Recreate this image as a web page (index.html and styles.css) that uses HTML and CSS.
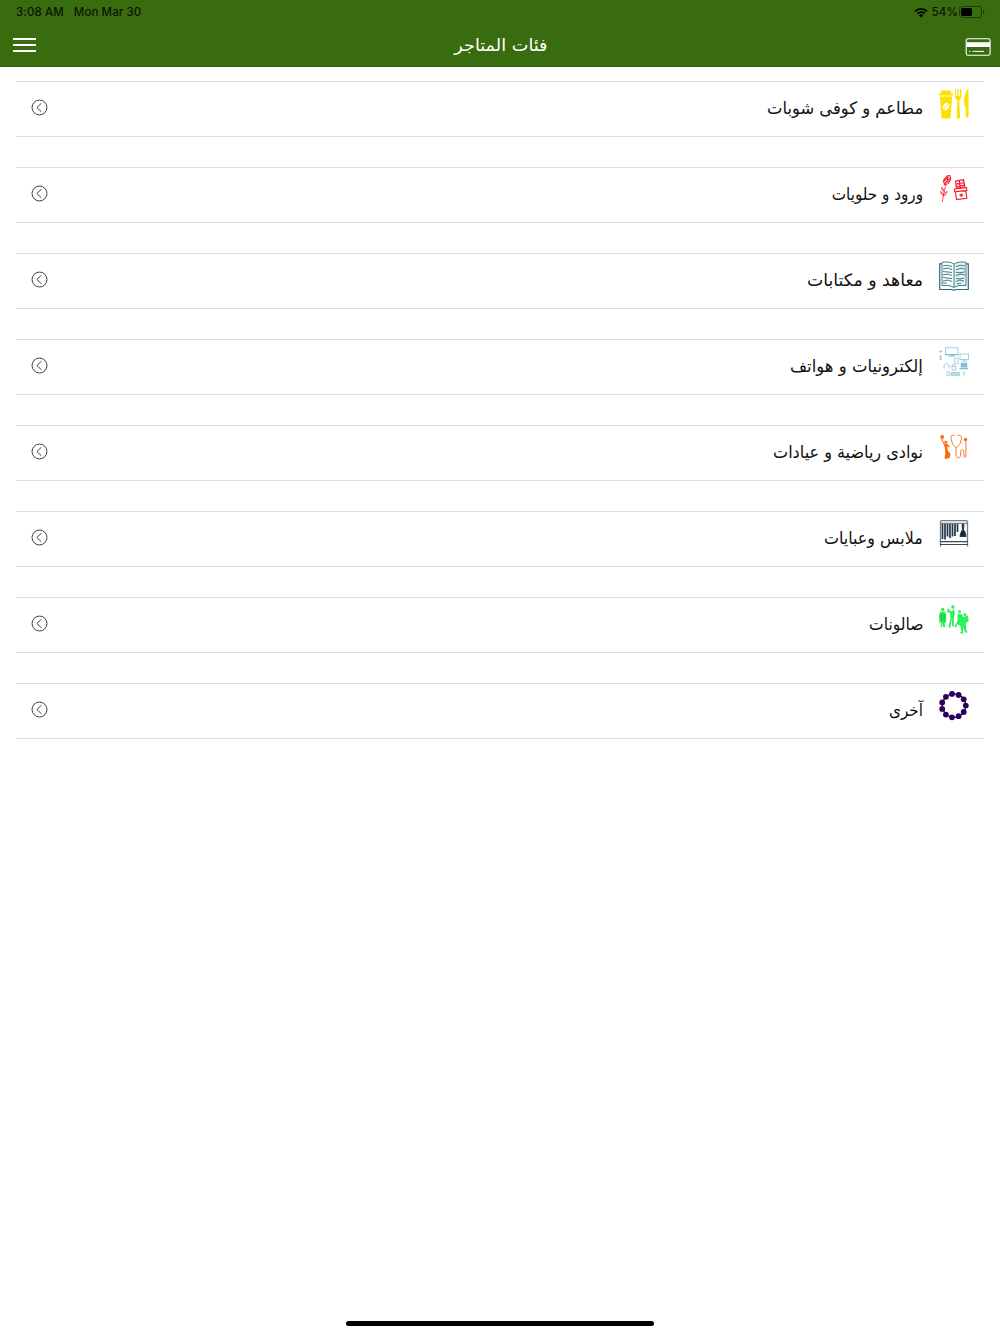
FILE: index.html
```
<!DOCTYPE html>
<html lang="ar" dir="rtl">
<head>
    <meta charset="UTF-8">
    <meta name="viewport" content="width=device-width, initial-scale=1.0">
    <title>فئات المتاجر</title>
    <link rel="stylesheet" href="styles.css">
</head>
<body>
    <header class="header">
        <div class="status-bar" dir="ltr">
            <span class="time">3:08 AM</span>
            <span class="date">Mon Mar 30</span>
            <svg class="wifi" viewBox="0 0 14 11">
                <path d="M.4 3.6a9.6 9.6 0 0 1 13.2 0L12.300 5a7.600 7.600 0 0 0-10.600 0z"/>
                <path d="M2.600 5.900a6.400 6.400 0 0 1 8.800 0L10 7.300a4.400 4.400 0 0 0-6 0z"/>
                <path d="M4.800 8.200a3.200 3.200 0 0 1 4.400 0L7 10.400z"/>
            </svg>
            <span class="percent">54%</span>
            <svg class="battery" viewBox="0 0 26 12">
                <rect x=".5" y=".5" width="22" height="11" rx="3" fill="none" stroke="#1d3a08"/>
                <rect x="2" y="2" width="11" height="8" rx="1.500"/>
                <path d="M24 4v4q1.300-.6 1.300-2T24 4z" fill="#1d3a08"/>
            </svg>
        </div>
        <div class="nav-bar" dir="ltr">
            <button class="menu-btn" aria-label="القائمة"><i></i><i></i><i></i></button>
            <h1 dir="rtl">فئات المتاجر</h1>
            <svg class="card-icon" viewBox="0 0 26 18">
                <rect x="1.200" y=".7" width="23.900" height="16.600" rx="1.800" fill="none" stroke="#fff" stroke-width="1.100"/>
                <path d="M1.500 4.200H25v4.800H1.500z" fill="#fff"/>
                <path d="M4 13.400h1.500M7.500 13.400h11.500" stroke="#fff"/>
            </svg>
        </div>
    </header>

    <main class="categories">
        <a class="category">
            <svg class="icon" viewBox="0 0 30 30" fill="#ffde00">
                <path d="M2.500 1.500h9l.8 3H14v2H0v-2h1.500zM1 7.500h12l-1.400 22H2.600z"/>
                <g stroke="#fff" stroke-width=".8"><ellipse cx="7" cy="17.500" rx="2.600" ry="3.800" transform="rotate(35 7 17.500)" fill="#fff"/><path d="M5 20.500q.5-3 2-3t2-3" fill="none" stroke="#ffde00"/></g>
                <path d="M16 0h1v7h1.300V0h1.300v7H21V0h1.300v7q0 3-2 4.200L21 29q-1.500 1.500-3.200 0l.6-17.800Q16 10 16 7z"/>
                <path d="M29.500 0v28q-1.200 1.500-2.700 0l-.2-10q-2-1.500-1.500-6Q26 2 29.500 0z"/>
            </svg>
            <span class="name name-food">مطاعم و كوفى شوبات</span>
            <svg class="arrow" viewBox="0 0 18 18"><circle cx="9" cy="9" r="7.900"/><path d="M11 4.500 6.200 9l4.800 4.500"/></svg>
        </a>
        <a class="category">
            <svg class="icon" viewBox="0 0 30 30" fill="none" stroke="#f5222d">
                <path d="M4.300 5.500 8 1l3-.5.500 4L9 8.500l-3.500 1.300zM5 6l4.500-4M5.700 8.500l5-5M8 1l1 6" stroke-width="1.100"/>
                <path d="M7 9.500Q5 17 3.200 27M5 16.500q-3-1-2.500-4 3 1 2.500 4zM4.500 20.500q-3-1.500-3-4 3 1 3 4zM4.300 21q0-4 4-4.500-.5 3.500-4 4.500z" stroke-width=".8"/>
                <path d="m16.500 6 8-1.200 1.400 7-8.500 1.200zM17 9l8-1.400M17.200 11.500l8-1.400M20.300 5.500l.9 7" stroke-width="1.200"/>
                <path d="m15.500 14 12-1.300.3 2.700-12 1.500zM16.400 17l1.200 7.500 10.200-1.200-1-7.500" stroke-width="1.200"/>
                <path d="m22.500 22.300-2.200-2q0-1.600 1.800-1.100 1-1.300 2.100.2z" fill="#f5222d" stroke="none"/>
            </svg>
            <span class="name name-flowers">ورود و حلويات</span>
            <svg class="arrow" viewBox="0 0 18 18"><circle cx="9" cy="9" r="7.900"/><path d="M11 4.500 6.200 9l4.800 4.500"/></svg>
        </a>
        <a class="category">
            <svg class="icon" viewBox="0 0 30 30" fill="none" stroke="#2e6b80">
                <path d="M15 3.500v22q3-1.500 11.500-1V1.500Q18 1 15 3.500z" fill="#e2f4ee" stroke="none"/>
                <path d="M15 3.200Q11 0 3 1.300V24.500q8-.8 12 1.800 4-2.600 12-1.800V1.300Q19 0 15 3.200zv23" stroke-width=".9"/>
                <path d="M3 2.800H.7v25.700H13q2 1.200 4 0h12.300V2.800H27" stroke-width="1.200"/>
                <path d="m4 5 4-.7 5 1.200M4 8l5-1 4 1.600M4 10.500l5 .5 4 .5M4 14l5-1 4 1.500M4 16.500l5 .6 4 .5M4 20l5-1 4 1.500M4 22l4 0M17 5.500l4.500-1.200L26 5M17 8.800l5-1.600 4 1M17 11.300l4 .5 5-1M17 14.500l5-1.500 4 1M17 17.500l4 .5 4-1M17 20.500l4-1.500 4 1.200M18 23l4-1" stroke-width=".9"/>
            </svg>
            <span class="name name-books">معاهد و مكتابات</span>
            <svg class="arrow" viewBox="0 0 18 18"><circle cx="9" cy="9" r="7.900"/><path d="M11 4.500 6.200 9l4.800 4.500"/></svg>
        </a>
        <a class="category">
            <svg class="icon" viewBox="0 0 30 30" fill="none" stroke="#a5cfdf">
                <rect x="6.500" y=".8" width="12.500" height="6.800"/>
                <path d="M6 7.600h13.500M10 9h6" stroke="#85bdd2" stroke-width="1.200"/>
                <path d="M.5 4.500h2.300M.5 9.500h2.300M.5 12h2.300" stroke="#85bdd2" stroke-width="1.300"/>
                <rect x="21" y="7" width="8.500" height="5.500"/><path d="M23 14h5" stroke-width="1.200"/>
                <rect x="15.800" y="11" width="3.200" height="5.500" stroke-width=".9"/>
                <path d="M22.500 16.500h5v3h-5zM20.500 21.500h8.500" fill="#85bdd2" stroke="#85bdd2" stroke-width="1.500"/>
                <path d="M5 20v-1.500q2.500-4.500 5 0V20M5 18.500v3M10 18.500v3M13 19v-1q1.500-1.500 3 0v1"/>
                <rect x="13" y="19.500" width="3.500" height="3.500"/>
                <path d="M12 25.500h8.500v2.800H12z" fill="#bedce7"/>
                <path d="M8 24.500h2.500v4H8zM25 24.500v5M23.500 26h3" stroke-width=".9"/>
            </svg>
            <span class="name name-electronics">إلكترونيات و هواتف</span>
            <svg class="arrow" viewBox="0 0 18 18"><circle cx="9" cy="9" r="7.900"/><path d="M11 4.500 6.200 9l4.800 4.500"/></svg>
        </a>
        <a class="category">
            <svg class="icon" viewBox="0 0 30 30" fill="#fd6a0a">
                <circle cx="3.200" cy="4" r="1.900"/><circle cx="6.700" cy="9.200" r="1.500"/>
                <path d="m2.300 6 1.200-.1 1.800 5 3.200.2 2.200 2.400-.5 1-2-1.300.7 4.500 2.600 3-.7 4-3 1H5.500l.8-5.500-.5-6z"/>
                <g fill="none" stroke="#fd7b28" stroke-width="1">
                    <path d="M15.500 2.500q-4-1.500-3.500 3 .5 6 5 9.500 5.500-4 5.500-9.500 0-4.500-4-3"/>
                    <path d="M17 15v5q0 5 2.300 5t2.300-5q0-4 2-3.500 1.500.4 1.300 4 0 4 1 4t1-4V8"/>
                </g>
                <circle cx="26.500" cy="6.500" r="1.700"/>
            </svg>
            <span class="name name-sports">نوادى رياضية و عيادات</span>
            <svg class="arrow" viewBox="0 0 18 18"><circle cx="9" cy="9" r="7.900"/><path d="M11 4.500 6.200 9l4.800 4.500"/></svg>
        </a>
        <a class="category">
            <svg class="icon" viewBox="0 0 30 30" fill="none" stroke="#70808d">
                <path d="M1.500 27.500V3Q1.500 1.700 3 1.700h24q1.500 0 1.500 1.300v24.500M1.500 4.300h27" stroke-width="1.300"/>
                <path d="M1 22.600h28M1 25.500h28" stroke="#354b5d" stroke-width="1.100"/>
                <path d="M3.500 5v15M6 5v15.500M8.500 5v12.500M11 5v14M13.500 5v12.500M16 5v12M18.500 5v8" stroke="#26384a" stroke-width="1.700"/>
                <path d="M23 5.500h2l-.5 5q2.800 4 2.500 7h-6q0-3 2.500-7z" fill="#112b42" stroke="#26384a"/>
            </svg>
            <span class="name name-clothes">ملابس وعبايات</span>
            <svg class="arrow" viewBox="0 0 18 18"><circle cx="9" cy="9" r="7.900"/><path d="M11 4.500 6.200 9l4.800 4.500"/></svg>
        </a>
        <a class="category">
            <svg class="icon" viewBox="0 0 30 30" fill="#2ef05d">
                <circle cx="3.700" cy="4.400" r="1.700"/>
                <path d="M1.500 6.500h4.700l1.300 4-.5 7.500H5.500l.7 4H3.800l-.5-4-.6 4H1.500l.7-4H.5L0 10.500z"/>
                <path d="M2.300 9v7M5 9v7" stroke="#159c38" stroke-width=".8"/>
                <circle cx="13.900" cy="2" r="1.700"/>
                <path d="M15 3.700 15.800 9l-1 4 .2 8.500h-1.800L13 14l-1.800 8.500H9.300L11.500 13 11 8l-3-1.200.4-1.500 4.600.9zM8.600 3.500l2 .5-.2 3H9z"/>
                <circle cx="20.500" cy="6.500" r="1.500"/><circle cx="26" cy="9.500" r="1.500"/>
                <path d="m18.500 9 3.800-.3 2 3.300 4.500-1.500 1 5-3 3 .5 6.500 1.500 2.500h-2.500l-2.300-5 .2 6-3.700-.3 1.800-1.500-.5-5-3-2.700-2 3.500-1.300-1 3-5.500z"/>
            </svg>
            <span class="name name-salons">صالونات</span>
            <svg class="arrow" viewBox="0 0 18 18"><circle cx="9" cy="9" r="7.900"/><path d="M11 4.500 6.200 9l4.800 4.500"/></svg>
        </a>
        <a class="category">
            <svg class="icon" viewBox="0 0 30 30" fill="#2b0059">
                <circle cx="15" cy="14.600" r="11.700" fill="none" stroke="#2b0059" stroke-width="1.300"/>
                <circle cx="13" cy="2.900" r="2.900"/><circle cx="19.600" cy="4" r="2.900"/>
                <circle cx="24.700" cy="8.300" r="2.900"/><circle cx="26.800" cy="14.600" r="2.900"/>
                <circle cx="24.700" cy="21" r="2.900"/><circle cx="19.600" cy="25.200" r="2.900"/>
                <circle cx="13" cy="26.300" r="2.900"/><circle cx="6.900" cy="23.600" r="2.900"/>
                <circle cx="3.200" cy="17.900" r="2.900"/><circle cx="3.200" cy="11.400" r="2.900"/>
                <circle cx="6.900" cy="5.800" r="2.900"/>
            </svg>
            <span class="name name-other">آخرى</span>
            <svg class="arrow" viewBox="0 0 18 18"><circle cx="9" cy="9" r="7.900"/><path d="M11 4.500 6.200 9l4.800 4.500"/></svg>
        </a>
    </main>

    <div class="home-indicator"></div>
</body>
</html>
```
FILE: styles.css
```
* {
    margin: 0;
    padding: 0;
    box-sizing: border-box;
}

body {
    min-height: 1334px;
    display: flex;
    flex-direction: column;
    font-family: 'DejaVu Sans', sans-serif;
    background: white;
    color: #111;
}

.header {
    height: 67px;
    background: #396c0f;
    border-bottom: 1px solid #315f0b;
}

.status-bar {
    height: 24px;
    padding: 0 15px 0 16px;
    display: flex;
    align-items: center;
    font-family: Inter, sans-serif;
    font-size: 11.5px;
    font-weight: 500;
    letter-spacing: 0.1px;
    color: #0b1503;
}

.date {
    margin-left: 10px;
}

.wifi {
    width: 14px;
    height: 11px;
    margin-left: auto;
}

.percent {
    margin: 0 1px 0 4px;
}

.battery {
    width: 26px;
    height: 12px;
}

.nav-bar {
    height: 43px;
    padding: 0 9px 1px 13px;
    display: flex;
    align-items: center;
    justify-content: space-between;
}

.menu-btn {
    width: 23px;
    display: flex;
    flex-direction: column;
    gap: 4px;
    background: none;
    border: none;
}

.menu-btn i {
    height: 2px;
    background: white;
}

h1 {
    font-size: 17px;
    font-weight: normal;
    line-height: 24px;
    color: white;
    transform: scaleX(1.04);
}

.card-icon {
    width: 26px;
    height: 18px;
    margin-top: 4px;
}

.categories {
    flex: 1;
    padding: 14px 16px 0;
}

.category {
    height: 56px;
    margin-bottom: 30px;
    padding: 0 15px;
    display: flex;
    align-items: center;
    border-top: 1px solid #dedede;
    border-bottom: 1px solid #dedede;
}

.icon {
    width: 30px;
    height: 30px;
    margin: 0 0 10px 16px;
}

.name {
    margin-bottom: 3px;
    font-size: 17px;
    line-height: 24px;
    white-space: nowrap;
    transform-origin: right center;
}

.name-food {
    transform: scaleX(0.963);
}

.name-flowers {
    transform: scaleX(0.895);
}

.name-books {
    transform: scaleX(1.018);
}

.name-electronics {
    transform: scaleX(0.971);
}

.name-sports {
    transform: scaleX(0.943);
}

.name-clothes {
    transform: scaleX(0.934);
}

.name-salons {
    transform: scaleX(0.915);
}

.name-other {
    transform: scaleX(0.895);
}

.arrow {
    width: 17px;
    height: 17px;
    margin-right: auto;
    margin-bottom: 3px;
    fill: none;
    stroke: #333;
    stroke-width: 1;
}

.home-indicator {
    width: 308px;
    height: 5px;
    margin: 0 auto 8px;
    border-radius: 3px;
    background: black;
}
```
